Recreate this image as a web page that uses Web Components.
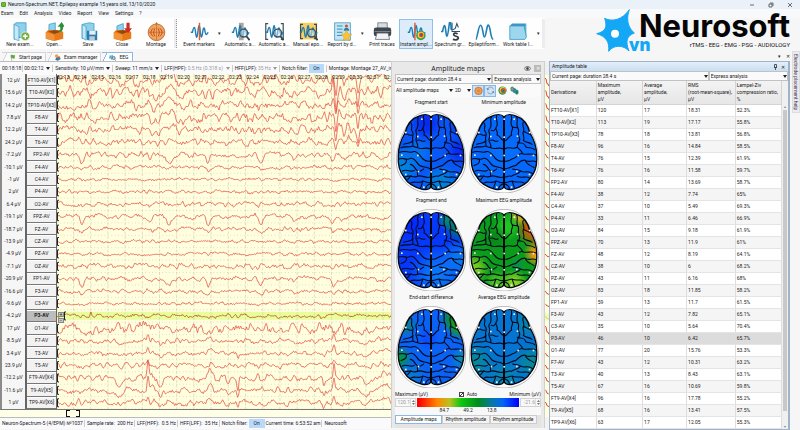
<!DOCTYPE html>
<html lang="en">
<head>
<meta charset="utf-8">
<title>Neuron-Spectrum.NET</title>
<style>
html,body{margin:0;height:100%}
body{font:5px/7px Roboto,"Open Sans",sans-serif;color:#222;background:#f6f6f7;overflow:hidden}
</style>
</head>
<body>
<neuro-app></neuro-app>
<script>
const BASE = `*{box-sizing:border-box}button,select,input{font:inherit;color:inherit;margin:0;padding:0;border:0;background:none;border-radius:0}svg{display:block}`;
function define(name, html, setup){
  const t = document.createElement('template');
  t.innerHTML = html.replace('<style>', '<style>' + BASE);
  customElements.define(name, class extends HTMLElement{
    connectedCallback(){
      if(this.shadowRoot) return;
      this.attachShadow({mode:'open'}).append(t.content.cloneNode(true));
      if(setup) setup.call(this, this.shadowRoot);
    }
  });
}
const CH = [
 ['12','FT10-AV[X1]','120','17','18.31','52.3%'],['15.6','T10-AV[X2]','113','19','17.17','55.8%'],
 ['14.2','TP10-AV[X3]','78','18','13.81','56.8%'],['7.8','F8-AV','96','16','14.84','58.5%'],
 ['12.2','T4-AV','76','15','12.39','61.9%'],['24.2','T6-AV','76','16','11.58','59.7%'],
 ['-7.2','FP2-AV','80','14','13.69','58.7%'],['-10.1','F4-AV','38','12','7.74','65%'],
 ['-1','C4-AV','37','10','5.49','69.3%'],['2','P4-AV','33','11','6.46','66.9%'],
 ['6.4','O2-AV','84','15','9.18','61.9%'],['-19.1','FPZ-AV','70','13','11.9','61%'],
 ['-18.7','FZ-AV','48','12','8.19','64.1%'],['-13.9','CZ-AV','38','10','6','68.2%'],
 ['-4.9','PZ-AV','43','11','6.16','68%'],['-7.1','OZ-AV','83','18','11.85','58.2%'],
 ['-20.9','FP1-AV','59','13','11.7','61.5%'],['-16.6','F3-AV','43','12','7.82','65.1%'],
 ['-9.6','C3-AV','35','10','5.64','70.4%'],['-4.2','P3-AV','46','10','6.42','65.7%'],
 ['17','O1-AV','77','20','15.76','53.3%'],['-8.5','F7-AV','43','12','10.31','63.2%'],
 ['3.4','T3-AV','40','13','8.43','63.1%'],['23.9','T5-AV','67','16','10.69','59.8%'],
 ['-12.2','FT9-AV[X4]','96','16','17.78','55.2%'],['-11.6','T9-AV[X5]','68','16','13.41','57.5%'],
 ['1','TP9-AV[X6]','63','17','12.05','55.3%']];
const SELECTED = 19;

/* ---------- toolbar icons, 24 x 24 grid ---------- */
const wave = (c='#1c7fb5') => `<path d="M1 13h2c2-8 3-8 4 0s2 9 3-1 2-10 3 0 2 8 3 1 2-7 3-1 2 4 4 1" fill="none" stroke="${c}" stroke-width="1.8"/>`;
const lens = `<circle cx="16" cy="14" r="5" fill="#cfe6f3" fill-opacity=".55" stroke="#3f5563" stroke-width="1.8"/><path d="M19.500 18l4 5" stroke="#33444f" stroke-width="2.400"/>`;
const ICONS = {
 new:`<path d="M4 3l11-2v18l-11 3z" fill="#2d97c8"/><path d="M6 1h13v18H8L4 22V3z" fill="#8fd0ea" stroke="#3b9fc9"/><path d="M4 3l6 3v18l-6-3z" fill="#c5e9f6" stroke="#3b9fc9" stroke-width=".8"/><circle cx="18" cy="18" r="5.500" fill="#75ad45" stroke="#e6f2d8"/><path d="M18 15v6M15 18h6" stroke="#fff" stroke-width="1.800"/>`,
 open:`<path d="M5 3l8-2v15H5z" fill="#8fd0ea" stroke="#3b9fc9"/><path d="M1 13l3-3h16l3 3v8l-11 3-11-3z" fill="#e97817"/><path d="M1 13l11 3v8l-11-3z" fill="#f29338"/><path d="M4 12l8-2 8 2-8 3z" fill="#8d4a12"/><path d="M15 13c4-1 5-4 4-7h-3l5-6 4 6h-2c0 5-3 8-8 7" fill="#2d8f3c"/>`,
 save:`<path d="M4 3l9-2 6 1v17H8l-4 2z" fill="#8fd0ea" stroke="#3b9fc9"/><path d="M4 3l5 3v17l-5-3z" fill="#c5e9f6" stroke="#3b9fc9"/><path d="M10 11h13v12H11l-1-1z" fill="#287db5"/><path d="M13 11h8v5h-8z" fill="#e6eef3"/><path d="M13 18h7v5h-7z" fill="#b5c9d6"/>`,
 close:`<path d="M5 5l8-3v14H5z" fill="#8fd0ea" stroke="#3b9fc9"/><path d="M1 13l3-3h16l3 3v8l-11 3-11-3z" fill="#e97817"/><path d="M1 13l11 3v8l-11-3z" fill="#f29338"/><path d="M4 12l8-2 8 2-8 3z" fill="#8d4a12"/><path d="M17 1h4v7h3l-5 6-5-6h3z" fill="#d02b24"/>`,
 montage:`<path d="M10 3l2-3 2 3z" fill="#b66b2c"/><circle cx="12" cy="13" r="10.500" fill="#f0a55c" stroke="#b45b1d"/><path d="M2 13h20M12 3v20" stroke="#b9652c" stroke-width=".8"/><path d="M8 8c-4 2-4 8 0 10M16 8c4 2 4 8 0 10M10 8c-2 4-2 7 0 10M14 8c2 4 2 7 0 10" fill="none" stroke="#c03018" stroke-width="1"/>`,
 event:`${wave()}<path d="M12 1v22" stroke="#df5a33" stroke-width="1.800"/>`,
 auto1:`<path d="M10 1h6v22h-6z" fill="#b1a49b"/>${wave()}${lens}`,
 auto2:`<path d="M4 2H1v20h3M20 2h3v20h-3" fill="none" stroke="#3c4b55" stroke-width="1.500"/>${wave()}${lens}`,
 manual:`<path d="M1 1h22v21H1z" fill="#f8cf5e"/><path d="M5 3H2v18h3M19 3h3v18h-3" fill="none" stroke="#3c4b55" stroke-width="1.500"/>${wave()}${lens}`,
 report:`<path d="M2 1h20v22H2z" fill="#c4e5f4" stroke="#4499c2"/><path d="M5 5h7M5 9h7M5 13h7M5 17h6" stroke="#3588b5" stroke-width="1.200"/><circle cx="17" cy="5" r="2" fill="#d5542b"/><path d="M13.500 11c0-5 7-5 7 0z" fill="#287db5"/><path d="M17 10l2 5 5 .5-4 3.500 1 5-4-2.500-4 2.500 1-5-4-3.500 5-.5z" fill="#fbc331" stroke="#df961c" stroke-width=".6"/>`,
 print:`<path d="M6 1h12v7H6z" fill="#d7dde1" stroke="#68737b"/><rect x="1" y="7" width="22" height="11" rx="3" fill="#3e474e"/><path d="M2 12h20" stroke="#89949b"/><path d="M5 14h14l2 8H3z" fill="#f1f3f4" stroke="#606a71"/>`,
 maps:`${wave()}<path d="M10 1v22" stroke="#df5a33" stroke-width="1.800"/><circle cx="17.500" cy="17" r="6" fill="#35a04b"/><circle cx="17.500" cy="16.500" r="4.200" fill="#f4cc35"/><circle cx="18" cy="16.500" r="2.800" fill="#e7452b"/><circle cx="18" cy="16.500" r="1.300" fill="#2862b8"/>`,
 spectrum:`<path d="M0 12h2c2-10 3-10 4-1s2 11 4-5 2-6 3 4" fill="none" stroke="#1c7fb5" stroke-width="2"/><path d="M14 1v11h10M15 10l3-2 2-6 2 5" fill="none" stroke="#2b4f70" stroke-width="1.300"/><path d="M21 15c-5-3-7 2-2 3s3 6-4 4" fill="none" stroke="#333c43" stroke-width="2.200"/>`,
 epi:`<path d="M1 22C3 22 4 4 7 4c3 0 3 15 5 15s3-17 5-15c3 2 2 17 6 18" fill="none" stroke="#1c7fb5" stroke-width="2"/>`,
 table:`<path d="M3 3h19v15H3z" fill="#5fb5da"/><path d="M1 5l3-3h18l-2 3z" fill="#3b97c4"/><path d="M1 5h18l3 14-2 3H1z" fill="#9ed7ed" stroke="#3b97c4"/>`,
 flag:`<path d="M6 5l4 18" stroke="#888" stroke-width="2"/><path d="M6 4c5-4 8 3 15-1l-2 12c-5 3-8-3-11 0z" fill="#5eaa3c"/>`,
 people:`<circle cx="9" cy="7" r="6" fill="#f2a03a"/><path d="M8 12l12-2 3 7-10 6-9-3z" fill="#287db5"/><circle cx="17" cy="12" r="4" fill="#df5a33"/>`,
 eeg:`<path d="M1 4h12v12H1z" fill="#9ed7ed"/>${wave()}${lens}`,
 head:`<circle cx="12" cy="13" r="10" fill="#f0a55c" stroke="#b45b1d" stroke-width="1.500"/><path d="M2 13h20M12 3v20M6 5c5 5 5 11 0 16M18 5c-5 5-5 11 0 16" fill="none" stroke="#b9652c" stroke-width=".7"/>`,
 ring:`<path d="M4 9c3-8 13-8 16 0M4 15c3 8 13 8 16 0" fill="none" stroke="#6c7c8d" stroke-width="1.800"/><path d="M1 5l3 6 5-3zM23 19l-3-6-5 3z" fill="#6c7c8d"/>`,
 rainbow:`<circle cx="12" cy="12" r="11" fill="#2d9a57"/><circle cx="13" cy="11" r="8.500" fill="#f4cc35"/><circle cx="14" cy="12" r="7" fill="#e7452b"/><circle cx="14" cy="13" r="4.500" fill="#38a04c"/><circle cx="14" cy="13" r="2.500" fill="#2862b8"/>`,
 pair:`<ellipse cx="6" cy="8" rx="5" ry="7" fill="#2b9a77"/><ellipse cx="6" cy="8" rx="2.500" ry="4" fill="#e7852b"/><ellipse cx="12" cy="12" rx="5" ry="7" fill="#2f86b5"/><ellipse cx="18" cy="16" rx="5" ry="7" fill="#38a04c"/><ellipse cx="18" cy="16" rx="2.500" ry="4" fill="#2862b8"/>`
};
const icon = (n,s) => `<svg width="${s}" height="${s}" viewBox="0 0 24 24" aria-hidden="true">${ICONS[n]}</svg>`;

define('title-bar', `<style>
:host{display:flex;align-items:center;height:9px;background:#eaf1f8;gap:2px;padding:0 7px 0 1px}
i{width:5px;height:5px;background:#7cb82f;border-radius:1px;border:1px solid #5c9a22}
span{flex:1}
nav{display:flex;gap:13px}
button{width:6px;height:6px}
</style><i></i><span>Neuron-Spectrum.NET, Epilepsy example 15 years old, 13/10/2020</span>
<nav><button aria-label="Minimize"><svg width="6" height="6" viewBox="0 0 6 6"><path d="M1 3h4" stroke="#333" stroke-width=".7"/></svg></button>
<button aria-label="Restore"><svg width="6" height="6" viewBox="0 0 6 6"><path d="M1 2h3v3H1zM2 1h3v3" fill="none" stroke="#333" stroke-width=".7"/></svg></button>
<button aria-label="Close"><svg width="6" height="6" viewBox="0 0 6 6"><path d="M1 1l4 4M5 1L1 5" stroke="#333" stroke-width=".7"/></svg></button></nav>`);

define('menu-bar', `<style>
:host{display:flex;align-items:center;height:9px;padding-left:1px;gap:6px;background:#f8f9fb}
</style><button>Exam</button><button>Edit</button><button>Analysis</button><button>Video</button><button>Report</button><button>View</button><button>Settings</button><button>?</button>`);

define('tool-button', `<style>
:host{display:block;width:34px}
button{width:100%;height:30px;display:flex;flex-direction:column;align-items:center;justify-content:space-between;padding:2px 0 0;white-space:nowrap;border:1px solid transparent}
:host([active]) button{background:#dcecfa;border-color:#8fc0ea}
</style><button><span class="i"></span><slot></slot></button>`, function(r){ r.querySelector('.i').innerHTML = icon(this.getAttribute('icon'),19); });

define('tool-bar', `<style>
:host{display:flex;align-items:center;height:31px;width:545px;background:#fefefe;padding-left:3px}
hr{width:3px;height:29px;margin:0 5px 0 1px;border:0;background:#ececee;border-right:1px dotted #999}
button{width:7px;height:20px;font-size:5px}
.n{width:6px}
.end{margin:0 0 0 auto;border:0}
</style>
<tool-button icon="new">New exam...</tool-button><tool-button icon="open">Open...</tool-button><tool-button icon="save">Save</tool-button><tool-button icon="close">Close</tool-button><tool-button icon="montage">Montage</tool-button><hr>
<tool-button icon="event">Event markers</tool-button><button aria-label="More markers">▾</button>
<tool-button icon="auto1">Automatic a...</tool-button><tool-button icon="auto2">Automatic a...</tool-button><tool-button icon="manual">Manual epo...</tool-button><tool-button icon="report">Report by d...</tool-button><button class="n" aria-label="More reports">▾</button>
<tool-button icon="print">Print traces</tool-button><tool-button icon="maps" active>Instant ampl...</tool-button><tool-button icon="spectrum">Spectrum gr...</tool-button><tool-button icon="epi">Epileptiform...</tool-button><tool-button icon="table">Work table l...</tool-button><button class="n" aria-label="More tables">▾</button><hr class="end">`);

define('doc-tab', `<style>
:host{display:block}
button{display:flex;align-items:center;gap:3px;height:9px;padding:0 3px 0 7px;border:1px solid #d4d4d8;border-width:1px 1px 0 0;background:linear-gradient(118deg,transparent 4px,#d4d4d8 4px,#d4d4d8 5px,#fafafa 5px);white-space:nowrap}
:host([active]) button{border-color:#8db7e4;background:linear-gradient(118deg,transparent 4px,#8db7e4 4px,#8db7e4 5px,#fff 5px)}
</style><button><span class="i"></span><slot></slot></button>`, function(r){ r.querySelector('.i').innerHTML = icon(this.getAttribute('icon'),7); });

define('tab-strip', `<style>
:host{display:flex;align-items:flex-end;height:12px;padding:0 9px 0 2px;gap:1px}
span{flex:1}
.b{width:7px;height:8px;margin-bottom:1px}
</style><doc-tab icon="flag">Start page</doc-tab><doc-tab icon="people">Exam manager</doc-tab><doc-tab icon="eeg" active>EEG</doc-tab><span></span><button class="b" aria-label="Tab list">▾</button><button class="b" aria-label="Close tab">✕</button>`);

define('brand-logo', `<style>
:host{display:grid;grid-template-columns:44px auto;align-items:start;font-weight:700}
svg{width:42px;height:43px}
.t{display:flex;flex-direction:column;align-items:flex-end;padding-top:3px}
.name{font:700 31px/28px "Inter","Open Sans",sans-serif;color:#050505}
.tag{font:400 6px/10px Roboto,sans-serif;color:#111}
.vn{position:absolute;left:34px;top:30px;font:800 17px/11px "Open Sans",sans-serif;color:#14a7f5}
</style>
<svg viewBox="612 26 126 129" aria-hidden="true"><path d="M715 28C706 52 708 80 730 98C708 106 702 122 714 152C698 134 668 132 653 153C656 126 646 108 617 100C644 94 650 80 641 54C664 66 694 58 715 28Z" fill="#14a7f5" stroke="#14a7f5" stroke-width="3" stroke-linejoin="round"/><circle cx="672" cy="100" r="12" fill="#fff"/></svg>
<span class="t"><span class="name">Neurosoft</span><span class="tag">rTMS - EEG - EMG - PSG - AUDIOLOGY</span></span><span class="vn">vn</span>`);

define('drop-down', `<style>
:host{display:inline-flex;position:relative;align-items:center;flex-shrink:0}
select{appearance:none;flex:1;min-width:0;height:9px;line-height:7px;padding:0 7px 0 1px}
:host([boxed]) select{border:1px solid #c2c2c2;background:#fafafa;height:10px;padding-right:6px}
:host([muted]){color:#999}
svg{position:absolute;right:1px;width:4px;height:3px;pointer-events:none}
</style><select><option></option></select><svg viewBox="0 0 4 3"><path d="M0 0h4L2 3z" fill="currentColor"/></svg>`, function(r){
  r.querySelector('option').textContent = this.getAttribute('value');
  r.querySelector('select').setAttribute('aria-label', this.getAttribute('label'));
});

define('filter-bar', `<style>
:host{display:flex;align-items:center;height:13px;background:#fafafd;white-space:nowrap;overflow:hidden;border-top:1px solid #bbb;padding-left:2px}
span{border-left:1px solid #ccc;padding-left:2px;margin-left:1px;flex-shrink:0}
.first{border:0;margin:0;padding:0}
.sep{padding:0;height:7px}
button{background:#b9d9fb;width:15px;height:9px;margin:0 1px;flex-shrink:0}
</style><span class="first">00:18:18</span><span class="sep"></span><drop-down label="Position" value="00:02:12"></drop-down>
<span>Sensitivity:</span><drop-down label="Sensitivity" value="10 µV/mm"></drop-down>
<span>Sweep:</span><drop-down label="Sweep" value="11 mm/s"></drop-down>
<span>LFF(HPF):</span><drop-down muted label="Low frequency filter" value="0.5 Hz (0.318 s)"></drop-down>
<span>HFF(LPF):</span><drop-down muted label="High frequency filter" value="35 Hz"></drop-down>
<span>Notch filter:</span><button>On</button><span>Montage: Montage 27_AV_in</span>`);

/* ---------- EEG traces ---------- */
function rng(seed){ let s = seed*7919+13; return () => { s = (s*1664525+1013904223)>>>0; return s/4294967296-.5; }; }
const blink = [[25,8,2],[93,4,2],[112,8,3],[135,1,6],[151,9,2],[204,8,2],[237,4,2],[276,8,2],[287,4,3],[325,4,4]];
const burst = [[91,-5,2],[95,7,2],[100,3,2],[114,-7,3],[123,5,2],[276,-9,1],[279,19,1],[283,-4,2],[287,5,2],[291,-7,2],[301,16,1],[304,-5,2]];
const left9 = [[63,6,3],[91,-17,1],[95,-3,2],[104,9,2],[153,-8,2],[171,4,2],[181,12,1],[267,8,1],[277,-16,1],[310,6,3],[328,-6,5]];
function spikes(i){
  const k = (a,f) => a.map(([x,h,w]) => [x,h*f,w]);
  if(i<4) return k(burst,[.7,1,.6,.8][i]);
  if(i===4) return k(burst,.6);
  if(i===5) return k(burst,.3);
  if(i===6) return k(blink,1);
  if(i===11||i===16) return k(blink,.85);
  if([7,12,17].includes(i)) return k(blink,.3);
  if(i>=24) return k(left9,[1,.8,.4][i-24]);
  if(i===22||i===21) return k(left9,.4);
  if(i===23) return k(left9,.25);
  if(i===19) return [[34,-5,1],[37,3,2],[278,-3,2],[300,-2,2]];
  return [];
}
const AMP = [4.8,5,4.1,4.6,3.9,3.3,2.4,1.9,1.3,1.5,2.1,2.2,1.8,1.3,1.3,2.5,2.2,1.8,1.3,1.6,4.9,2.4,2,2.3,3,2.6,2.8];
function trace(i, y, width){
  const r = rng(i+3), sp = spikes(i), a = AMP[i];
  const knots = (n) => Array.from({length:n}, () => r()*2);
  const slow = knots(160), fast = knots(400);
  const at = (k,t) => { const j = Math.floor(t), f = t-j, u = f*f*(3-2*f); return k[j]*(1-u)+k[j+1]*u; };
  let d = '';
  for(let x=0; x<=width; x+=.5){
    let v = a*1.05*at(slow,x/(3+(i%3)*.3)) + a*.5*at(fast,x/1.2) + r()*.9;
    for(const [c,h,w] of sp){ const q=(x-c)/w; if(Math.abs(q)<4) v += h*Math.exp(-q*q*.6); }
    d += (x?'L':'M')+x+' '+(y+v).toFixed(2);
  }
  return d;
}
define('eeg-view', `<style>
:host{display:grid;grid-template-columns:25px 32px minmax(0,1fr);min-height:0;background:#ffffe0;border-bottom:1px solid #777}
.col{display:grid;grid-auto-rows:minmax(0,1fr);text-align:center;background:#f6f6f6;border-left:2px solid #8b8b8b}
.col span{display:grid;place-items:center;min-height:0;line-height:7px;white-space:nowrap}
.lab{background:#f2f2f2;border:solid #666;border-width:0 1px 0 2px}
.lab span{border-bottom:1px solid #777;border-top:1px solid #fff}
.lab .sel{background:#bdbdbd;font-weight:700}
.plot{position:relative;overflow:hidden;min-height:0}
.plot svg{width:100%;height:100%}
.time{position:absolute;inset:0 0 auto 0;display:grid;grid-template-columns:repeat(19,1fr) 7px;white-space:nowrap;color:#111}
.step{position:absolute;left:1px;top:71%;display:grid;gap:1px}
.step button{width:6px;height:5px;background:#c8c8c0;border:1px solid #888;line-height:3px;font-size:5px}
</style><div class="col val"></div><div class="col lab"></div>
<div class="plot"><svg viewBox="0 0 334 335" preserveAspectRatio="none" aria-hidden="true"></svg><div class="time"></div>
<div class="step"><button aria-label="Increase">+</button><button aria-label="Decrease">−</button></div></div>`, function(r){
  r.querySelector('.val').innerHTML = CH.map(c => `<span>${c[0]} µV</span>`).join('');
  r.querySelector('.lab').innerHTML = CH.map((c,i) => `<span class="${i===SELECTED?'sel':''}">${c[1]}</span>`).join('');
  r.querySelector('.time').innerHTML = Array.from({length:20},(_,i)=>`<span>02:${13+i}</span>`).join('');
  const p = 335/27; let s = '';
  s += `<rect x="0" y="${p*SELECTED+2}" width="334" height="8" fill="#e9fd9c"/>`;
  for(let x=16.5; x<334; x+=17.2) s += `<path d="M${x} 0V335" stroke="#dcd7ba" stroke-width=".8" stroke-dasharray="3 1.500"/>`;
  for(let i=0;i<27;i++) s += `<path d="M0 ${p*(i+1)}H334" stroke="#cfcbad" stroke-width=".8" stroke-dasharray=".8 2.600"/>`;
  for(let i=0;i<27;i++){
    const y = p*(i+.5), sel = i===SELECTED, x0 = sel?8:1;
    s += `<path d="${trace(i,y,334)}" fill="none" stroke="${sel?'#b8401c':'#e2493c'}" stroke-opacity=".88" stroke-width=".85" stroke-linejoin="round"/>`;
    s += `<path d="M${x0+1} ${y-4}h-1.500v8h1.500" fill="none" stroke="#222" stroke-width="1"/>`;
  }
  r.querySelector('svg').innerHTML = s;
});
define('eeg-sliver', `<style>
:host{display:block;background:#ffffe0;border-top:14px solid #f0f0f2;border-bottom:13px solid #f3f3f5;min-height:0;overflow:hidden}
svg{width:100%;height:100%}
</style><svg viewBox="0 0 4 342" preserveAspectRatio="none" aria-hidden="true"></svg>`, function(r){
  const p = 335/27;
  r.querySelector('svg').innerHTML = CH.map((c,i)=>`<path d="M0 ${p*(i+.5)-AMP[i]/1.5}l1 1 1 ${AMP[i]} 1 0 1 ${AMP[i]/2}" fill="none" stroke="#e0483c"/>`).join('') + `<path d="M0 242h4" stroke="#e9fd9c" stroke-width="7" opacity=".7"/>`;
});
define('page-scroller', `<style>
:host{display:block;height:8px;background:#ffffe8;border-bottom:1px solid #bbb;padding-left:66px}
i{display:block;width:14px;height:7px;background:linear-gradient(#111,#111) 0 0/3px 1px,linear-gradient(#111,#111) 0 100%/3px 1px,linear-gradient(#111,#111) 100% 0/3px 1px,linear-gradient(#111,#111) 100% 100%/3px 1px;background-repeat:no-repeat;border:solid #111;border-width:0 1px}
</style><i></i>`);
define('status-bar', `<style>
:host{display:flex;align-items:center;height:11px;background:#fafafd;white-space:nowrap;overflow:hidden;padding-left:2px}
span{padding-right:1px;margin-right:2px;border-right:1px solid #ccc}
span:last-child,.p{border:0}
.p{margin:0}
button{background:#b9d9fb;width:16px;height:9px;margin-right:1px}
</style><span>Neuron-Spectrum-5 (4/EPM) №1037</span><span>Sample rate:&nbsp; 200 Hz</span><span>LFF(HPF):&nbsp; 0.5 Hz</span><span>HFF(LPF):&nbsp; 35 Hz</span><span class="p">Notch filter:</span><button>On</button><span>Current time: 6:53:52 am</span><span>Neurosoft</span>`);

/* ---------- brain maps ---------- */
const OUT = 'M120 170C112 160 95 162 82 168C62 174 48 194 42 218C30 238 22 262 22 285C20 310 26 335 40 352C50 370 75 382 94 387C106 389 116 386 120 380C124 386 134 389 146 387C165 382 190 370 200 352C214 335 220 310 218 285C218 262 210 238 198 218C192 194 178 174 158 168C145 162 128 160 120 170Z';
const HEAD = 'M120 153C75 153 55 180 38 215C20 250 14 285 17 315C22 360 65 398 120 398C175 398 218 360 223 315C226 285 220 250 202 215C185 180 165 153 120 153Z';
const FOLDS = 'M98 166C94 180 104 188 98 198C90 206 104 212 99 224C112 228 108 238 118 240M82 170C76 184 86 194 78 204C68 212 82 220 76 232C70 244 84 250 80 262M82 210C90 214 94 208 98 198M60 188C68 196 56 206 64 214C72 222 60 232 66 240C60 252 50 246 38 252M44 222C50 218 56 228 63 224M30 262C42 256 50 264 66 256C66 250 64 246 66 240M80 240C90 236 92 246 102 242M80 262C92 270 104 258 118 266M66 258C76 262 76 262 80 262M26 276C44 268 52 280 66 274C80 270 86 286 96 296C104 304 110 304 118 302M24 296C38 290 46 302 58 294C70 290 76 306 84 314C92 322 106 318 118 326M46 298C48 310 40 312 30 316M58 312C70 312 70 326 80 332C88 336 92 330 98 326M34 332C48 324 58 338 70 330M42 350C56 342 66 354 80 348C92 342 104 356 118 350M80 348C80 340 78 338 80 332M60 368C70 360 84 372 96 362C106 364 110 370 118 366M88 384C92 376 92 370 96 362M104 386C104 378 108 374 118 370M50 358C54 352 58 350 60 346M142 166C146 178 136 188 144 198C150 208 138 214 143 224C132 230 132 238 122 242M158 170C164 182 154 192 162 204C168 214 158 220 166 232C172 242 158 248 160 260M144 198C152 206 156 198 162 204M178 186C172 196 184 204 178 214C174 222 184 232 178 240C186 248 194 244 204 252M178 214C186 214 190 222 200 222M160 260C148 270 136 256 122 266M160 246C172 250 180 244 186 260C196 264 204 260 212 268M216 284C200 276 190 286 176 280C166 276 162 288 150 294C140 296 134 306 122 302M176 280C174 270 164 268 160 260M216 304C202 298 196 308 184 300C170 296 164 310 154 316C142 316 136 326 122 326M184 300C188 314 200 314 210 322M206 340C192 328 184 340 170 332C158 324 154 330 146 326M170 332C164 342 152 340 142 348C134 344 130 350 122 350M198 354C186 344 176 356 160 348M180 368C170 360 156 370 144 362C134 364 130 368 122 366M152 384C148 376 148 370 144 362M136 386C136 378 132 374 122 370';
const DOTS = [[92,176],[120,176],[150,176],[44,216],[80,228],[120,230],[160,227],[197,216],[32,284],[80,285],[120,285],[162,285],[208,285],[44,342],[82,333],[120,334],[158,333],[196,342],[98,380],[142,380]];
const MAPS = {
 start:['#0858f6',[[105,190,50,'#0628f0'],[210,270,50,'#0628f0'],[205,200,40,'#0640f0'],[35,315,60,'#0084dc'],[150,370,60,'#0084d8'],[80,280,50,'#0674ee']]],
 min:['#0468fa',[[120,280,60,'#0670ff']]],
 end:['#0638fa',[[200,205,42,'#007e55'],[170,185,32,'#058a70'],[205,300,60,'#0a78f0'],[140,350,90,'#0a78f8'],[60,200,50,'#0428ff']]],
 max:['#0c9c1c',[[210,210,55,'#ff4a00'],[165,175,30,'#d8b020'],[218,285,40,'#ff9a10'],[130,205,42,'#20c820'],[30,330,45,'#80d020'],[150,375,42,'#90d820'],[100,375,40,'#50c820'],[90,240,40,'#0a8818'],[160,320,26,'#089048']]],
 diff:['#0a62f5',[[190,190,45,'#0c9418'],[205,215,38,'#18a010'],[24,310,42,'#00963a'],[46,210,36,'#068090'],[214,310,36,'#088cb0'],[60,360,50,'#0a78d0'],[110,250,35,'#0a4cff']]],
 avg:['#0474d0',[[30,320,60,'#06889a'],[205,320,55,'#06889a'],[195,200,50,'#0684a8'],[120,370,60,'#0684b0'],[110,260,50,'#0574dc']]]
};
define('brain-map', `<style>
:host{display:grid;justify-items:center;align-content:start;text-align:center;white-space:nowrap}
svg{width:70px;height:82px}
div{line-height:8px;height:13px}
</style><div><slot></slot></div><svg viewBox="15 152 210 246" aria-hidden="true"></svg>`, function(r){
  const [base, spots] = MAPS[this.getAttribute('kind')];
  r.querySelector('svg').innerHTML = `<defs><clipPath id="c"><path d="${OUT}"/></clipPath>${spots.map((s,i)=>`<radialGradient id="g${i}"><stop offset="0" stop-color="${s[3]}"/><stop offset=".35" stop-color="${s[3]}" stop-opacity=".85"/><stop offset="1" stop-color="${s[3]}" stop-opacity="0"/></radialGradient>`).join('')}</defs>
  <path d="${HEAD}" fill="#fff" stroke="#999" stroke-width="2"/>
  <g clip-path="url(#c)"><path d="${OUT}" fill="${base}"/>${spots.map((s,i)=>`<circle cx="${s[0]}" cy="${s[1]}" r="${s[2]}" fill="url(#g${i})"/>`).join('')}</g>
  <path d="${FOLDS}" fill="none" stroke="#04091c" stroke-width="3.300" stroke-linecap="round" stroke-linejoin="round"/>
  <path d="M120 168V382" stroke="#04060c" stroke-width="6"/><path d="${OUT}" fill="none" stroke="#04060c" stroke-width="4"/>
  ${DOTS.map(d=>`<rect x="${d[0]-2}" y="${d[1]-2}" width="5" height="5" fill="#eee"/>`).join('')}`;
});
define('spin-box', `<style>
:host{display:flex;width:21px;height:9px;border:1px solid #d2d2d2;background:#f8f8f8;color:#999}
input{width:100%;min-width:0;text-align:right;line-height:7px}
b{display:grid;width:5px;border-left:1px solid #ddd;font-weight:400}
button{width:4px;height:3px;display:grid;place-items:center}
</style><input><b><button aria-label="Up"><svg width="3" height="2"><path d="M0 2h3L1.500 0z" fill="#777"/></svg></button><button aria-label="Down"><svg width="3" height="2"><path d="M0 0h3L1.500 2z" fill="#777"/></svg></button></b>`, function(r){
  const n = r.querySelector('input'); n.value = this.getAttribute('value'); n.setAttribute('aria-label', this.getAttribute('label'));
});
define('maps-panel', `<style>
:host{display:flex;flex-direction:column;background:#e9e9e9;border:1px solid #d0d0d0;border-width:1px 1px 0;padding:0 3px;min-height:0;margin-bottom:2px}
header{display:grid;grid-template-columns:1fr auto auto;align-items:center;gap:3px;height:12px;text-align:center;font:7px/9px "Open Sans",sans-serif}
h2{font:inherit;margin:0}
header button{width:7px;height:7px;display:grid;place-items:center}
header .x{background:#bbb;color:#fff;font-size:5px;line-height:5px}
.sel{display:grid;grid-template-columns:2fr 1fr}
.tools{display:flex;align-items:center;height:13px;background:#fafafa}
.tools button{width:12px;height:12px;display:grid;place-items:center;border:1px solid transparent}
.tools .on{background:#cfe3f8;border-color:#86b9ea}
.body{flex:1;min-height:0;background:#f8f8f8;display:flex;flex-direction:column}
.maps{flex:1;min-height:0;display:grid;grid-template-columns:1fr 1fr;grid-template-rows:repeat(3,1fr);padding:1px 1px 0 0}
.cap,.rng{display:grid;align-items:center}
.cap{grid-template-columns:1fr auto 1fr;height:7px}
.cap span:last-child{text-align:right}
label{display:flex;align-items:center;gap:3px}
input{appearance:none;margin:0;width:5px;height:5px;border:1px solid #444;background:linear-gradient(135deg,#fff 40%,#333 40%,#333 60%,#fff 60%)}
.rng{grid-template-columns:auto 1fr auto;gap:1px}
.bar{height:9px;background:linear-gradient(90deg,#f00 2%,#f80 20%,#bcc020 32%,#0fc80f 43%,#008c1c 60%,#087a98 72%,#0464f8 84%,#00f)}
.nums{display:flex;justify-content:center;gap:14px;line-height:7px;height:8px}
footer{display:flex;background:#e4e4e4;padding:0 4px 4px 0}
footer button{border:1px solid #ccc;background:#f4f4f4;height:9px;flex:1;white-space:nowrap;line-height:7px}
footer .a{background:#fff;border-color:#8db7e4}
</style>
<header><h2>Amplitude maps</h2><button aria-label="Visibility"><svg width="7" height="5" viewBox="0 0 7 5"><path d="M0 2.500C2 0 5 0 7 2.500C5 5 2 5 0 2.500Z" fill="none" stroke="#444" stroke-width=".8"/><circle cx="3.500" cy="2.500" r="1.200" fill="#333"/></svg></button><button class="x" aria-label="Close">✕</button></header>
<div class="sel"><drop-down boxed label="Fragment" value="Current page: duration 28.4 s"></drop-down><drop-down boxed label="Analysis" value="Express analysis"></drop-down></div>
<div class="tools"><drop-down style="width:59px" label="Maps" value="All amplitude maps"></drop-down><drop-down style="width:18px" label="View" value="2D"></drop-down><button class="on" aria-label="Electrodes">${icon('head',9)}</button><button class="on" aria-label="Rotate">${icon('ring',9)}</button><button aria-label="Colours">${icon('rainbow',9)}</button><button aria-label="Series">${icon('pair',9)}</button></div>
<div class="body"><div class="maps"><brain-map kind="start">Fragment start</brain-map><brain-map kind="min">Minimum amplitude</brain-map><brain-map kind="end">Fragment end</brain-map><brain-map kind="max">Maximum EEG amplitude</brain-map><brain-map kind="diff">End-start difference</brain-map><brain-map kind="avg">Average EEG amplitude</brain-map></div>
<div class="cap"><span>Maximum (µV)</span><label><input type="checkbox" checked>Auto</label><span>Minimum (µV)</span></div>
<div class="rng"><spin-box label="Maximum" value="120.1"></spin-box><div class="bar"></div><spin-box label="Minimum" value="-21.6"></spin-box></div>
<div class="nums"><span>84.7</span><span>49.2</span><span>13.8</span></div></div>
<footer><button class="a">Amplitude maps</button><button>Rhythm amplitude</button><button>Rhythm amplitude</button></footer>`);

define('amplitude-table', `<style>
:host{display:flex;flex-direction:column;min-height:0;border:1px solid #9fb4c8;border-width:1px 2px 1px 1px;background:#fff}
header{display:flex;align-items:center;height:9px;background:linear-gradient(#e4effa,#c9def2);padding:0 2px;gap:2px}
h2{font:inherit;margin:0;flex:1}
header button{width:6px;height:7px;display:grid;place-items:center;line-height:6px}
.sel{display:grid;grid-template-columns:2fr 1fr}
.wrap{flex:1;min-height:0;display:grid;grid-template-columns:minmax(0,1fr) 6px}
table{width:100%;height:100%;border-collapse:collapse;table-layout:fixed}
th{font-weight:400;text-align:left;height:23px;line-height:7px;white-space:nowrap;background:linear-gradient(#f3f3f3,#e6e6e6);border:0 solid #d4d4d4;border-width:0 1px 1px 0;padding:0 1px}
td{padding:0 1px;line-height:7px;border-right:1px solid #ddd;border-bottom:1px solid #e4e4e4}
tr:nth-child(even) td{background:#f5f5f5}
tr.s td{background:#dcdcdc}
.bar{background:#f0f0f0;display:flex;flex-direction:column;align-items:center;padding-top:24px;gap:1px;line-height:4px;color:#888}
.bar i{flex:1;width:4px;background:#c8c8c8}
.bar b{height:4px;font:4px/4px "DejaVu Sans",sans-serif}
.bar b:last-child{margin-top:13px}
</style><header><h2>Amplitude table</h2><button aria-label="Pin"><svg width="5" height="6" viewBox="0 0 5 6"><path d="M1 3.500h3M1.500 3.500v-3h2v3M2.500 3.500V6" fill="none" stroke="#333" stroke-width=".8"/></svg></button><button aria-label="Close">✕</button></header>
<div class="sel"><drop-down boxed label="Fragment" value="Current page: duration 28.4 s"></drop-down><drop-down boxed label="Analysis" value="Express analysis"></drop-down></div>
<div class="wrap"><table><colgroup><col style="width:20%"><col style="width:20%"><col style="width:19%"><col style="width:21%"><col style="width:20%"></colgroup><thead><tr><th>Derivatione</th><th>Maximum<br>amplitude,<br>µV</th><th>Average<br>amplitude,<br>µV</th><th>RMS<br>(root-mean-square),<br>µV</th><th>Lempel-Ziv<br>compression ratio,<br>%</th></tr></thead><tbody></tbody></table><div class="bar"><b>▴</b><i></i><b>▾</b></div></div>`, function(r){
  r.querySelector('tbody').innerHTML = CH.map((c,i)=>`<tr class="${i===SELECTED?'s':''}">${c.slice(1).map(v=>`<td>${v}</td>`).join('')}</tr>`).join('');
});
define('side-dock', `<style>
:host{display:block;padding-left:2px}
button{writing-mode:vertical-rl;background:#ececef;border:1px solid #ddd;width:8px;padding:2px 0;line-height:6px;white-space:nowrap;color:#40304a}
</style><button>Electrode placement help</button>`);

define('neuro-app', `<style>
:host{display:flex;flex-direction:column;height:100vh;position:relative}
main{flex:1;min-height:0;display:grid;grid-template-columns:minmax(0,1fr) 154px 4px 241px 10px}
.eeg{display:grid;grid-template-rows:auto minmax(0,1fr) auto auto;min-height:0;padding-bottom:1px}
brand-logo{position:absolute;right:10px;top:9px}
side-dock{margin-top:-10px}
</style><title-bar></title-bar><menu-bar></menu-bar><tool-bar></tool-bar><tab-strip></tab-strip>
<main><section class="eeg"><filter-bar></filter-bar><eeg-view></eeg-view><page-scroller></page-scroller><status-bar></status-bar></section>
<maps-panel></maps-panel><eeg-sliver></eeg-sliver><amplitude-table></amplitude-table><side-dock></side-dock></main>
<brand-logo></brand-logo>`);
</script>
</body>
</html>
